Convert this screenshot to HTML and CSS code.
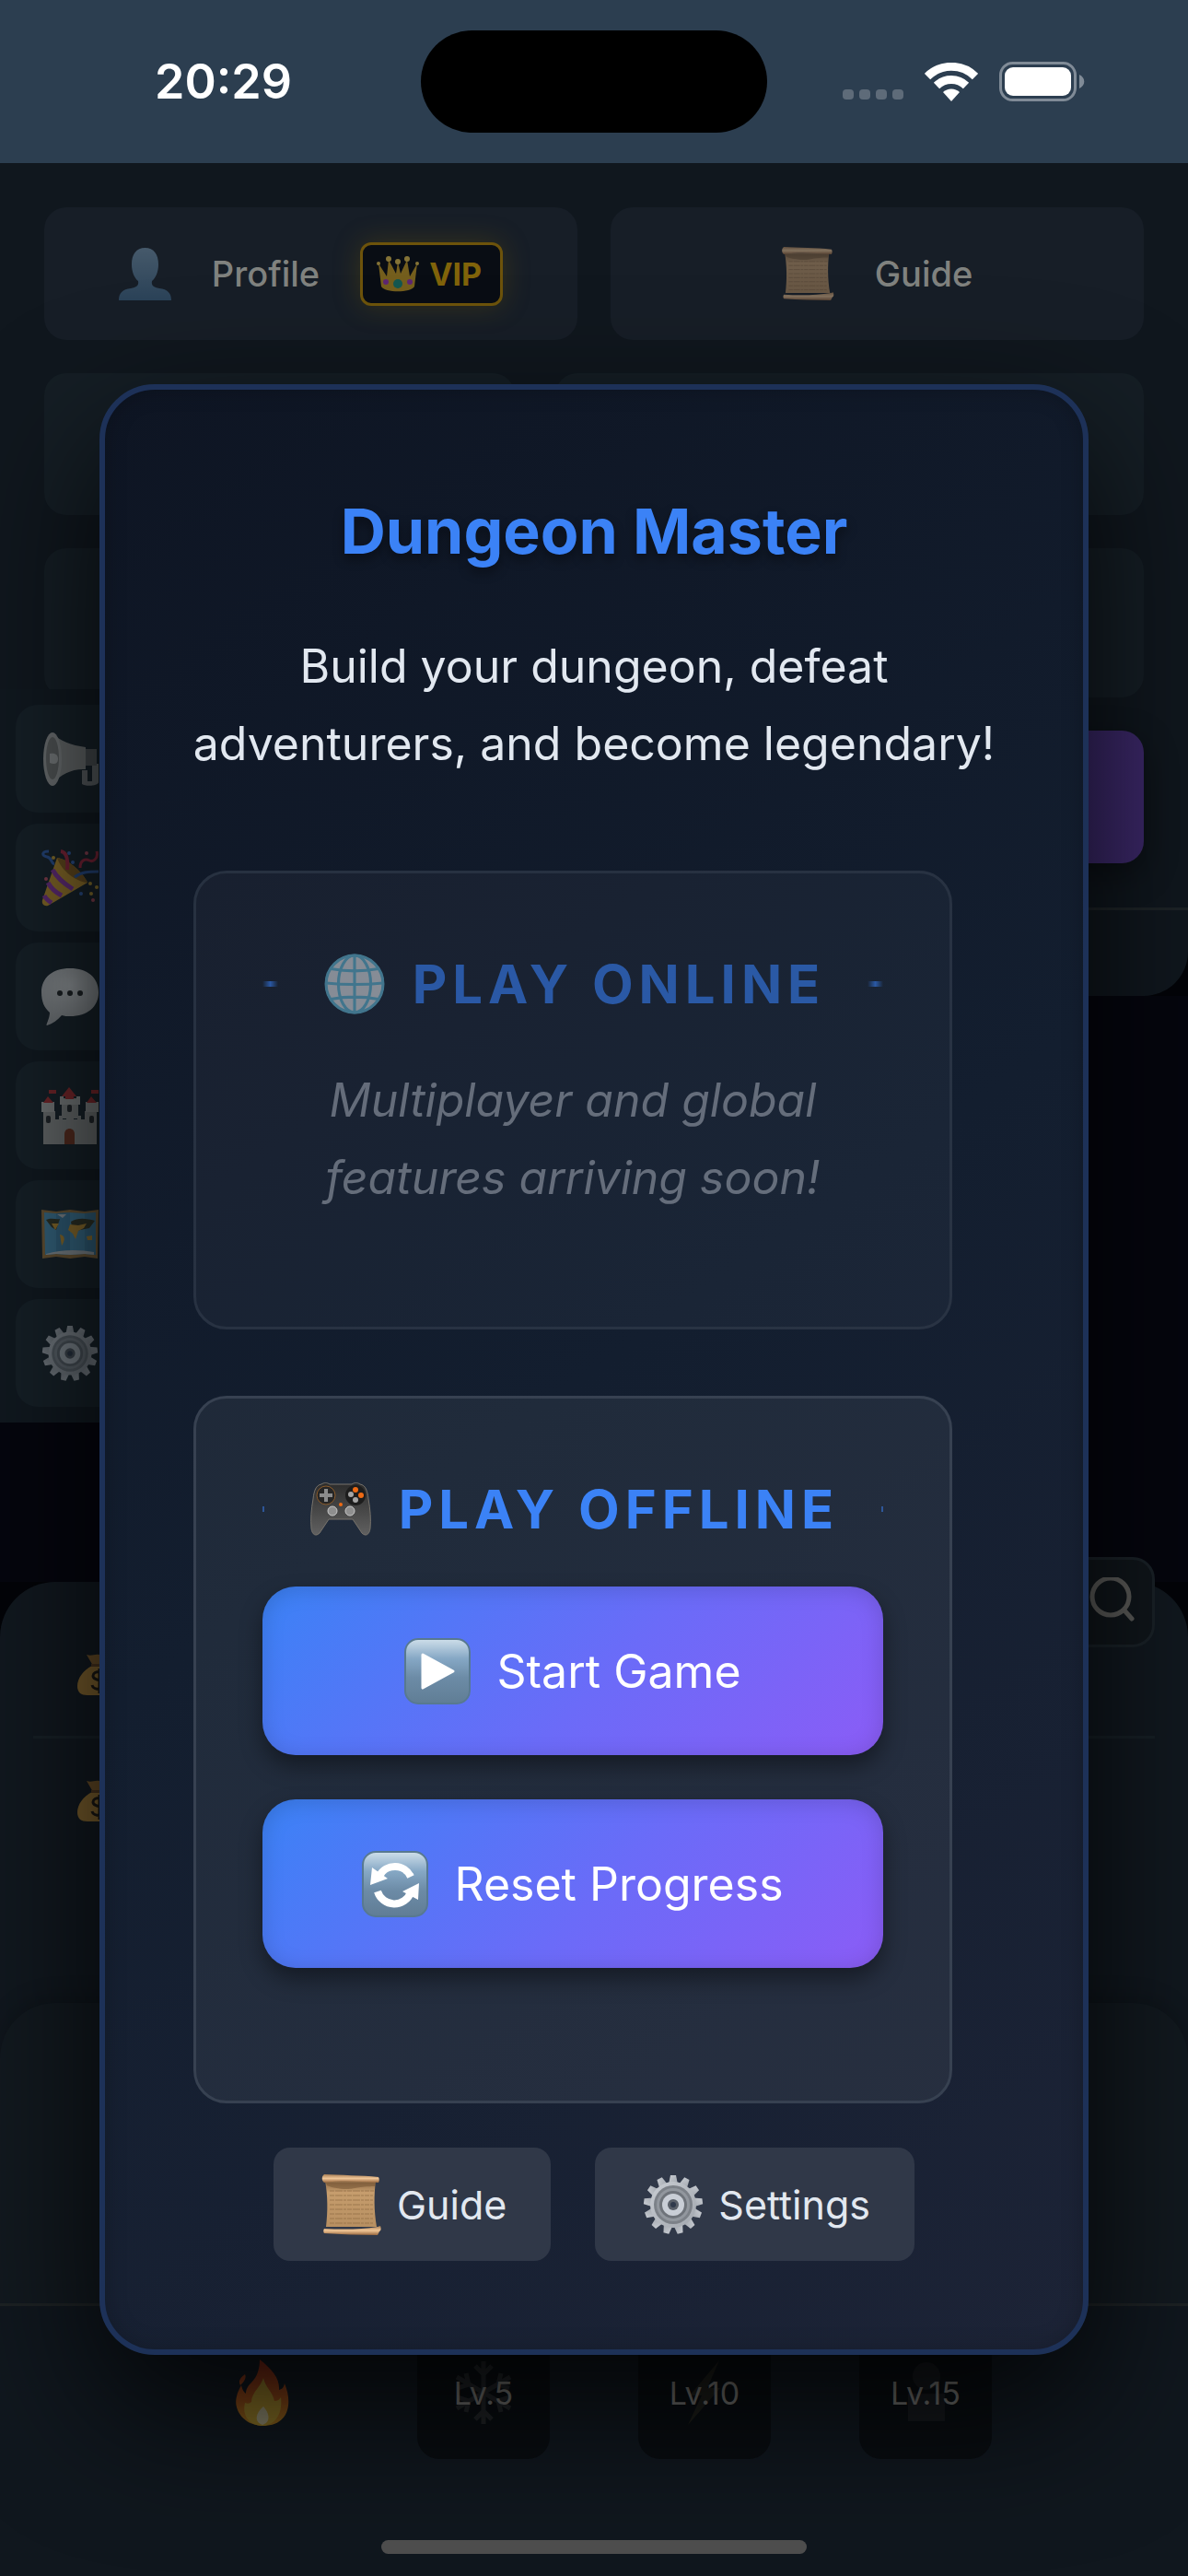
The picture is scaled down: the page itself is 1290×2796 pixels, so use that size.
FILE: index.html
```html
<!DOCTYPE html>
<html lang="en">
<head>
  <meta charset="utf-8">
  <meta name="viewport" content="width=device-width, initial-scale=1">
  <title>Dungeon Master</title>
  <link rel="stylesheet" href="styles.css">
</head>
<body>
  <!-- Shared icons -->
  <svg class="sprite" aria-hidden="true">
    <defs>
      <linearGradient id="paper" x1="0" x2="0" y1="0" y2="1">
        <stop offset="0" stop-color="#8a6845"/>
        <stop offset=".25" stop-color="#c69d6d"/>
        <stop offset="1" stop-color="#b78f61"/>
      </linearGradient>
      <linearGradient id="roll" x1="0" x2="0" y1="0" y2="1">
        <stop offset="0" stop-color="#a97f55"/>
        <stop offset=".5" stop-color="#efc596"/>
        <stop offset="1" stop-color="#99683f"/>
      </linearGradient>
      <linearGradient id="steel" x1="0" x2="1" y1="0" y2="1">
        <stop offset="0" stop-color="#c9cdd3"/>
        <stop offset="1" stop-color="#a2a7ae"/>
      </linearGradient>
      <linearGradient id="key" x1="0" x2="0" y1="0" y2="1">
        <stop offset="0" stop-color="#cfdfea"/>
        <stop offset=".3" stop-color="#86a8c5"/>
        <stop offset=".6" stop-color="#6c8ba6"/>
        <stop offset="1" stop-color="#607d95"/>
      </linearGradient>
      <linearGradient id="bust" x1="0" x2="0" y1="0" y2="1">
        <stop offset="0" stop-color="#7595ae"/>
        <stop offset="1" stop-color="#3f678a"/>
      </linearGradient>
      <linearGradient id="pad" x1="0" x2="0" y1="0" y2="1">
        <stop offset="0" stop-color="#2c2c2c"/>
        <stop offset="1" stop-color="#606060"/>
      </linearGradient>
      <linearGradient id="flame" x1="0" x2="0" y1="0" y2="1">
        <stop offset="0" stop-color="#d8320f"/>
        <stop offset=".6" stop-color="#e8690f"/>
        <stop offset="1" stop-color="#f0a81a"/>
      </linearGradient>
      <radialGradient id="bubble" cx=".5" cy=".3" r=".7">
        <stop offset="0" stop-color="#f7f7f7"/>
        <stop offset="1" stop-color="#bdbdbd"/>
      </radialGradient>
    </defs>

    <symbol id="icon-scroll" viewBox="0 0 64 66">
      <path fill="url(#paper)" d="M3 7h55c-2 15-2 32 1 50H4C6 40 6 24 3 7z"/>
      <path stroke="#8f6c45" stroke-width="1" stroke-dasharray="5 1 8 1 3 1" opacity=".7" d="M8 18h48M8 23h47M8 28h47M8 33h47M8 38h47M8 43h47M8 48h47M8 53h47"/>
      <path fill="#6f5030" opacity=".5" d="M4 9h54l-1 4c-18 0-22 3-30 3C18 16 9 14 5 12z"/>
      <path fill="url(#roll)" d="M2 0c18 1 40 1 59 3 1 2 1 4 0 6C42 8 22 6 2 9-1 7-1 2 2 0z"/>
      <path fill="url(#roll)" d="M2 59c20 1 40 1 58-2l3-1c1 3 1 5-1 6l-2 4c-20 0-40-1-58-2-1-1-1-4 0-5z"/>
    </symbol>

    <symbol id="icon-gear" viewBox="-33 -33 66 66">
      <g fill="url(#steel)">
        <path id="tooth" d="M-5-22l2-10h6l2 10z"/>
        <use href="#tooth" transform="rotate(27.7)"/>
        <use href="#tooth" transform="rotate(55.4)"/>
        <use href="#tooth" transform="rotate(83.1)"/>
        <use href="#tooth" transform="rotate(110.8)"/>
        <use href="#tooth" transform="rotate(138.5)"/>
        <use href="#tooth" transform="rotate(166.2)"/>
        <use href="#tooth" transform="rotate(193.8)"/>
        <use href="#tooth" transform="rotate(221.5)"/>
        <use href="#tooth" transform="rotate(249.2)"/>
        <use href="#tooth" transform="rotate(276.9)"/>
        <use href="#tooth" transform="rotate(304.6)"/>
        <use href="#tooth" transform="rotate(332.3)"/>
      </g>
      <circle r="25" fill="url(#steel)"/>
      <circle r="21" fill="#7c8188"/>
      <circle r="18" fill="#92979e"/>
      <circle r="15" fill="#6e737a"/>
      <circle r="12" fill="#c9ced6"/>
      <circle r="6" fill="#5a6069"/>
      <circle r="3" fill="#303a4c"/>
    </symbol>

    <symbol id="icon-moneybag" viewBox="0 0 50 46">
      <path fill="#b0792c" d="M11 1c6 2 8-1 14 0s8-1 14 0l-7 12H18z"/>
      <path fill="#d79c37" d="M17 13h16c10 5 16 14 16 22 0 7-4 10-11 10H12C5 45 1 42 1 35c0-8 6-17 16-22z"/>
      <path fill="#7b4d1d" d="M16 11h18v3H16z"/>
      <path fill="none" stroke="#201608" stroke-width="3" d="M33 24c-1-6-15-6-15 0s15 4 15 10-15 6-16 0M25 16v27"/>
    </symbol>
  </svg>

  <div class="status-bar">
    <div class="status-time">20:29</div>
    <div class="island"></div>
    <div class="status-icons">
      <span class="signal"><i></i><i></i><i></i><i></i></span>
      <svg width="58" height="42" viewBox="0 0 58 42">
        <g fill="none" stroke="#fff" stroke-width="9">
          <path d="M3 15a37 37 0 0 1 52 0"/>
          <path d="M13 25a23 23 0 0 1 32 0"/>
        </g>
        <path fill="#fff" d="M29 42l-9-10a13 13 0 0 1 18 0z"/>
      </svg>
      <svg width="93" height="44" viewBox="0 0 93 44">
        <rect x="1.5" y="1.5" width="81" height="40" rx="13" fill="none" stroke="#808b97" stroke-width="3"/>
        <rect x="6" y="6" width="72" height="31" rx="9" fill="#fff"/>
        <path fill="#808b97" d="M87 14c7 3 7 12 0 15z"/>
      </svg>
    </div>
  </div>

  <div class="game">
    <header class="header">
      <div class="header-row">
        <button class="tile nav-button">
          <svg class="dim" width="57" height="57" viewBox="0 0 57 57">
            <path fill="url(#bust)" d="M28.500 0C38 0 43 7 43 18c0 8-3 15-7 18-1 5 2 7 8 8 9 1 13 5 13 13H0c0-8 4-12 13-13 6-1 9-3 8-8-4-3-7-10-7-18C14 7 19 0 28.500 0z"/>
          </svg>
          <span>Profile</span>
          <span class="vip">
            <svg class="dim" width="46" height="39" viewBox="0 0 46 39">
              <path fill="#dfae27" d="M2 8l9 14 2-18 8 15 2-13 3 13 7-15 3 18 8-14-3 25c-4 7-32 7-36 0z"/>
              <g fill="#ffd95a"><circle cx="2" cy="8" r="2"/><circle cx="13" cy="3" r="3"/><circle cx="23" cy="6" r="3"/><circle cx="33" cy="3" r="3"/><circle cx="44" cy="8" r="2"/></g>
              <ellipse cx="23" cy="30" rx="5" ry="5" fill="#1fa08c"/>
              <circle cx="10" cy="28" r="3" fill="#b13fd0"/>
              <circle cx="36" cy="28" r="3" fill="#b13fd0"/>
            </svg>
            VIP
          </span>
        </button>
        <button class="tile nav-button">
          <svg class="dim" width="57" height="58"><use href="#icon-scroll"/></svg>
          <span>Guide</span>
        </button>
      </div>
      <div class="header-row stats">
        <div class="tile stat"></div>
        <div class="tile stat wide"></div>
      </div>
      <div class="tile stat bar"></div>
      <button class="upgrade" aria-label="Upgrade"></button>
      <div class="header-foot"></div>
    </header>

    <nav class="sidebar">
      <button class="side-button" aria-label="News">
        <svg class="dim" width="62" height="62" viewBox="0 0 62 62">
          <path fill="#8f8f8f" d="M44 43h6v12h5V36h7v20c0 4-14 5-18 2z"/>
          <path fill="#a5a39f" d="M12 3c8 8 20 13 36 15v24c-14-1-27 5-36 16z"/>
          <path fill="#6d6d6d" d="M48 20h12v18H48z"/>
          <ellipse cx="12" cy="31" rx="10" ry="29" fill="#b9b7b3"/>
          <ellipse cx="12" cy="30" rx="7" ry="23" fill="#85837f"/>
          <path fill="#c9c7c3" d="M9 25c6-1 9 1 9 6s-4 6-9 4z"/>
        </svg>
      </button>
      <button class="side-button" aria-label="Events">
        <svg class="dim" width="62" height="62" viewBox="0 0 62 62">
          <path fill="#e0a526" d="M17 9c10 1 27 14 33 27L7 61c-4 1-7-2-6-6z"/>
          <path fill="#9a6614" d="M17 9c10 1 27 14 33 27-12-1-28-12-33-27z"/>
          <path fill="none" stroke="#9a34b4" stroke-width="5" d="M12 22c5 9 14 16 22 21M7 36c4 7 9 11 15 14M3 50c2 4 5 6 8 8"/>
          <path fill="none" stroke="#c82340" stroke-width="4" d="M21 2c7 1 8 9 7 20"/>
          <path fill="none" stroke="#2f63c0" stroke-width="3" d="M36 30c8-6 16-6 26-6M8 2c-8 0-8 5-2 6s4 7 8 8"/>
          <path fill="none" stroke="#c82340" stroke-width="3" d="M42 20c0-9 6-10 10-8s10-2 8-10"/>
          <g fill="#e0b030"><circle cx="13" cy="9" r="2"/><circle cx="53" cy="37" r="2"/><circle cx="60" cy="41" r="2"/><circle cx="54" cy="48" r="2"/></g>
          <g fill="#d8536a"><circle cx="5" cy="32" r="2"/><circle cx="49" cy="4" r="2"/><circle cx="56" cy="55" r="2"/></g>
          <g fill="#3a6fd0"><circle cx="30" cy="4" r="2"/><circle cx="34" cy="14" r="2"/><circle cx="43" cy="48" r="2"/></g>
        </svg>
      </button>
      <button class="side-button" aria-label="Chat">
        <svg class="dim" width="62" height="62" viewBox="0 0 62 62">
          <path fill="url(#bubble)" d="M31 0c19 0 31 10 31 26S50 52 31 52c-3 0-6 0-9-1-4 5-10 9-16 11-2 0 3-7 3-14C3 43 0 36 0 26 0 10 12 0 31 0z"/>
          <g fill="#222"><circle cx="20" cy="27" r="3"/><circle cx="31" cy="27" r="3"/><circle cx="42" cy="27" r="3"/></g>
        </svg>
      </button>
      <button class="side-button" aria-label="Castle">
        <svg class="dim" width="62" height="62" viewBox="0 0 62 62">
          <path fill="#a8a6a2" d="M2 26h13v36H2zM47 26h13v36H47zM15 35h4v-4h4v4h4v-4h8v4h4v-4h4v4h4v27H15zM22 12h18v22H22z"/>
          <path fill="#c2c0bc" d="M0 16h14v11H0zM48 16h14v11H48zM20 10h4v3h4v-3h6v3h4v-3h4v9H20z"/>
          <path fill="#c22a2a" d="M30 0l8 10h-3v3h-9v-3h-4zM7 10l6 7H2zM54 10l6 7H49zM8 3h8v4H8zM54 3h8v4h-8z"/>
          <path fill="#8a3418" d="M25 62V51c0-8 11-8 11 0v11z"/>
          <g fill="#262626"><rect x="28" y="19" width="5" height="8" rx="2"/><rect x="5" y="31" width="5" height="8" rx="2"/><rect x="52" y="31" width="5" height="8" rx="2"/></g>
        </svg>
      </button>
      <button class="side-button" aria-label="World map">
        <svg class="dim" width="62" height="62" viewBox="0 0 62 62">
          <path fill="#a97b3a" d="M0 4l16 2 15-2 16 2 15-2-1 53-14-2-16 2-15-2-15 2z"/>
          <path fill="#4f9fca" d="M3 7l13 1 15-1 16 1 12-1v46l-12-1-16 1-15-1-12 1z"/>
          <path fill="#3c82ab" d="M16 8l15-1v46l-15-1zM47 8l12-1v46l-12-1z" opacity=".6"/>
          <path fill="#3b3b22" d="M5 15c6-3 10 0 15-1l-4 12-5-3zM32 17c8-5 18-3 26-1l-6 8-10 2-8 3z"/>
          <path fill="#e2a52c" d="M11 19h8l-4 7zM20 31c6 1 6 6 2 12zM31 20l9 1 9-2-3 5-6 3-3 9-3-6-5-4zM49 33l6-1v5h-5z"/>
          <path fill="#cfd4d8" d="M5 52c16-5 36-5 52-2v3l-10-1-16 1-15-1-11 1zM17 9h10l-4 4z"/>
        </svg>
      </button>
      <button class="side-button" aria-label="Settings">
        <svg class="dim" width="62" height="62"><use href="#icon-gear"/></svg>
      </button>
    </nav>

    <main class="arena">
      <button class="search" aria-label="Search">
        <svg width="54" height="54" viewBox="0 0 54 54" fill="none" stroke="#5c5c5a" stroke-width="5" stroke-linecap="round">
          <circle cx="28" cy="21" r="20"/>
          <path d="M43 36l8 9"/>
        </svg>
      </button>
    </main>

    <section class="panel resources">
      <div class="resource"><svg class="dim" width="50" height="46"><use href="#icon-moneybag"/></svg></div>
      <div class="resource"><svg class="dim" width="50" height="46"><use href="#icon-moneybag"/></svg></div>
    </section>
    <section class="panel details"></section>

    <footer class="footer">
      <div class="skills">
        <button class="skill" aria-label="Fire">
          <svg class="dim" width="58" height="72" viewBox="0 0 58 72">
            <path fill="url(#flame)" d="M26 0c14 11 22 21 21 33 4-1 5-3 6-7 9 21 5 46-23 46C8 72-3 54 1 40c1-5 3-8 5-12 1 4 2 7 5 9 0-5 2-8 6-12C24 18 26 9 26 0zM10 16c2 4-1 8-5 12-3-5 1-9 5-12z"/>
            <path fill="#f6c22c" d="M30 20c2 10 10 15 12 25 3 0 5-1 7-4 2 15-4 30-20 31C13 71 7 60 10 47c3 1 5 1 7-1 0-10 10-16 13-26z"/>
            <path fill="#fff0b8" d="M30 51c7 8 8 17-1 20-9-3-8-12 1-20z"/>
          </svg>
        </button>
        <button class="skill locked" disabled>
          <svg class="ghost" width="66" height="70" viewBox="0 0 66 70" fill="none" stroke="#9a9a9a" stroke-width="5"><path d="M33 1v68M4 18l58 34M4 52l58-34M24 6l9 9 9-9M24 64l9-9 9 9M5 30l12-4-3-12M61 40l-12 4 3 12M5 40l12 4-3 12M61 30l-12-4 3-12"/></svg>
          <span>Lv.5</span>
        </button>
        <button class="skill locked" disabled>
          <svg class="ghost" width="40" height="70" viewBox="0 0 40 70" fill="#8c7a4a"><path d="M36 0L4 38h13L2 70l35-40H23z"/></svg>
          <span>Lv.10</span>
        </button>
        <button class="skill locked" disabled>
          <svg class="ghost" width="50" height="66" viewBox="0 0 50 66" fill="#5b5b5b"><circle cx="26" cy="15" r="15"/><path d="M6 34h40v30H6z"/></svg>
          <span>Lv.15</span>
        </button>
      </div>
      <div class="home-indicator"></div>
    </footer>

    <div class="overlay">
      <div class="modal" role="dialog" aria-labelledby="modal-title">
        <h1 id="modal-title">Dungeon Master</h1>
        <p class="intro">Build your dungeon, defeat adventurers, and become legendary!</p>

        <section class="mode mode-disabled">
          <h2 class="mode-title">
            <span>
              <svg width="66" height="66" viewBox="0 0 64 64">
                <circle cx="32" cy="32" r="31" fill="#d5d9de"/>
                <g fill="none" stroke="#62b2cf" stroke-width="3">
                  <circle cx="32" cy="32" r="30"/>
                  <ellipse cx="32" cy="32" rx="17" ry="30"/>
                  <path d="M32 2v60M2 31c20 2 40 2 60 0M7 16c16 3 34 3 50 0M7 48c16-3 34-3 50 0"/>
                </g>
              </svg>
              PLAY ONLINE
            </span>
          </h2>
          <p class="soon">Multiplayer and global features arriving soon!</p>
        </section>

        <section class="mode">
          <h2 class="mode-title">
            <span>
              <svg width="66" height="58" viewBox="0 0 66 58">
                <path fill="url(#pad)" stroke="#77736c" stroke-width="1" d="M12 2c3-2 6-2 9 0h24c3-2 6-2 9 0 6 1 8 7 9 16 2 11 3 22 2 32-1 7-5 9-9 5L46 40H20L10 55c-4 4-8 2-9-5-1-10 0-21 2-32C4 9 6 3 12 2z"/>
                <circle cx="17" cy="14" r="10" fill="#262626" stroke="#8a5a2a" stroke-width="1"/>
                <path fill="#8b8b8b" d="M15 7h4v5h5v4h-5v5h-4v-5h-5v-4h5z"/>
                <circle cx="49" cy="14" r="11" fill="#1d1d1d"/>
                <g fill="#ee6a14"><circle cx="49" cy="8" r="3"/><circle cx="55" cy="14" r="3"/><circle cx="33" cy="24" r="2"/></g>
                <g fill="#a5a5a5"><circle cx="44" cy="13" r="3"/><circle cx="49" cy="19" r="3"/></g>
                <g fill="#8f8f8f" stroke="#c9c9c9" stroke-width="1"><circle cx="24" cy="31" r="5"/><circle cx="43" cy="31" r="5"/></g>
              </svg>
              PLAY OFFLINE
            </span>
          </h2>
          <div class="mode-actions">
            <button class="play-button">
              <svg width="72" height="72" viewBox="0 0 72 72">
                <rect x="1" y="1" width="70" height="70" rx="14" fill="url(#key)" stroke="#587990" stroke-width="2"/>
                <path fill="#fff" stroke="#fff" stroke-width="3" stroke-linejoin="round" d="M20 18l33 18-33 18z"/>
              </svg>
              Start Game
            </button>
            <button class="play-button">
              <svg width="72" height="72" viewBox="0 0 72 72">
                <rect x="1" y="1" width="70" height="70" rx="14" fill="url(#key)" stroke="#587990" stroke-width="2"/>
                <path fill="none" stroke="#fff" stroke-width="8" d="M53 28a19 19 0 0 0-34-1M17 44a19 19 0 0 0 36 1"/>
                <path fill="#fff" d="M11 18l-2 19 19-7zM62 35l-18 9 17 9z"/>
              </svg>
              Reset Progress
            </button>
          </div>
        </section>

        <div class="modal-links">
          <button class="link-button"><svg width="66" height="66"><use href="#icon-scroll"/></svg>Guide</button>
          <button class="link-button"><svg width="66" height="66"><use href="#icon-gear"/></svg>Settings</button>
        </div>
      </div>
    </div>
  </div>
</body>
</html>
```

FILE: styles.css
```css
* {
  box-sizing: border-box;
}
body {
  margin: 0;
  min-height: 100vh;
  display: flex;
  flex-direction: column;
  background: #030408;
  color: #e2e8f0;
  font-family: Inter, "Liberation Sans", sans-serif;
}
button {
  border: 0;
  padding: 0;
  background: none;
  color: inherit;
  font-family: inherit;
}
svg {
  display: block;
  flex: none;
}
.sprite {
  position: absolute;
  width: 0;
  height: 0;
}
.dim {
  opacity: 0.5;
}

/* Status bar */
.status-bar {
  height: 177px;
  padding: 0 112px 0 168px;
  display: grid;
  grid-template-columns: 1fr 376px 1fr;
  align-items: center;
  background: #2c3e50;
  color: #fff;
}
.status-time {
  font-size: 52px;
  font-weight: 600;
}
.island {
  height: 111px;
  border-radius: 56px;
  background: #000;
  margin-left: -28px;
  margin-right: 28px;
}
.status-icons {
  display: flex;
  justify-content: flex-end;
  align-items: center;
  gap: 23px;
}
.signal {
  display: flex;
  gap: 6px;
  padding-top: 28px;
}
.signal i {
  width: 12px;
  height: 11px;
  border-radius: 4px;
  background: #5e6b79;
}

/* Game screen */
.game {
  position: relative;
  flex: 1;
  display: flex;
  flex-direction: column;
}
.header {
  display: flex;
  flex-direction: column;
  gap: 36px;
  padding-top: 48px;
  background: #10171e;
  border-radius: 0 0 48px 48px;
}
.header > * {
  margin: 0 48px;
}
.header-row {
  display: flex;
  gap: 36px;
}
.tile {
  background: #171e27;
  border-radius: 24px;
}
.nav-button {
  flex: 1;
  height: 144px;
  display: flex;
  align-items: center;
  justify-content: center;
  gap: 44px;
  color: #80827f;
  font-size: 38px;
  font-weight: 500;
}
.vip {
  display: flex;
  align-items: center;
  gap: 11px;
  height: 69px;
  padding: 0 20px 0 15px;
  border: 3px solid #6d530b;
  border-radius: 12px;
  background: #090d14;
  color: #80630a;
  font-size: 34px;
  font-weight: 700;
  box-shadow: 0 0 30px rgba(130, 100, 0, 0.3);
}
.stats {
  gap: 44px;
}
.stat {
  flex: 1;
  height: 154px;
  background: #151e25;
}
.stat.wide {
  flex: 1.25;
}
.stat.bar {
  flex: none;
  height: 162px;
}
.upgrade {
  height: 144px;
  border-radius: 24px;
  background: linear-gradient(90deg, #1a2b66, #3c2869);
  box-shadow: 0 12px 36px rgba(0, 0, 0, 0.4);
}
.header .header-foot {
  height: 96px;
  margin: 12px 0 0;
  border-top: 3px solid #1d2327;
}
.sidebar {
  position: absolute;
  z-index: 1;
  top: 571px;
  left: 0;
  display: flex;
  flex-direction: column;
  gap: 12px;
  padding: 17px;
  background: #10181f;
}
.side-button {
  width: 117px;
  height: 117px;
  display: flex;
  align-items: center;
  justify-content: center;
  border-radius: 24px;
  background: #151f26;
}
.arena {
  flex: 1;
  position: relative;
  background: #05060e;
}
.search {
  position: absolute;
  right: 36px;
  bottom: -71px;
  width: 98px;
  height: 98px;
  display: flex;
  align-items: center;
  justify-content: center;
  border: 3px solid #1a2228;
  border-radius: 24px;
  background: #10161b;
}
.panel {
  background: #11181f;
  border-radius: 60px 60px 0 0;
}
.resources {
  height: 517px;
  padding: 35px 36px;
}
.resource {
  display: flex;
  align-items: center;
  height: 135px;
  padding-left: 47px;
  border-bottom: 3px solid #172026;
}
.resource:last-child {
  border: 0;
}
.details {
  height: 326px;
  margin-top: -60px;
  background: #12191f;
  box-shadow: 0 -6px 24px rgba(0, 0, 0, 0.2);
}
.footer {
  height: 296px;
  padding: 22px 0 24px;
  display: flex;
  flex-direction: column;
  align-items: center;
  justify-content: space-between;
  border-top: 3px solid #1d2224;
  background: #10171e;
}
.skills {
  display: flex;
  gap: 96px;
}
.skill {
  position: relative;
  width: 144px;
  height: 144px;
  display: flex;
  align-items: center;
  justify-content: center;
  border-radius: 24px;
}
.locked {
  background: #090d11;
  color: #6e6e6c;
  font-size: 34px;
}
.locked span {
  position: relative;
  z-index: 1;
}
.ghost {
  position: absolute;
  opacity: 0.15;
}
.home-indicator {
  position: relative;
  z-index: 3;
  width: 462px;
  height: 15px;
  border-radius: 8px;
  background: #4d4d4d;
}

/* Start dialog */
.overlay {
  position: absolute;
  inset: 0;
  z-index: 2;
  display: grid;
  place-items: center;
  overflow: hidden;
}
.modal {
  width: calc(100% - 216px);
  padding: 96px;
  border: 6px solid #1d3158;
  border-radius: 60px;
  background: linear-gradient(145deg, #0e1523 0%, #131e2f 50%, #1c2336 100%);
  box-shadow: 0 60px 150px rgba(0, 0, 0, 0.8), inset 0 0 24px rgba(0, 0, 0, 0.2);
  text-align: center;
}
.modal h1 {
  margin: 0 0 48px;
  color: #3b82f6;
  font-size: 68px;
  line-height: 114px;
  text-shadow: 0 6px 12px rgba(0, 0, 0, 0.4);
}
.intro {
  margin: 0 -24px 96px;
  font-size: 50px;
  line-height: 84px;
}
.mode {
  margin: 0 46px 48px 0;
  padding: 72px;
  border: 3px solid #374151;
  border-radius: 36px;
  background: rgba(255, 255, 255, 0.06);
}
.mode-disabled {
  margin-bottom: 72px;
  opacity: 0.6;
}
.mode-title {
  display: flex;
  align-items: center;
  margin: 0 0 36px;
  color: #3b82f6;
  font-size: 58px;
  line-height: 96px;
  letter-spacing: 6px;
  white-space: nowrap;
}
.mode-title::before,
.mode-title::after {
  content: "";
  flex: 1;
  height: 6px;
  background: linear-gradient(90deg, transparent, #3b82f6, transparent);
}
.mode-title span {
  display: flex;
  align-items: center;
  gap: 30px;
  margin: 0 46px 0 50px;
}
.soon {
  margin: 0 0 48px;
  color: #9ca3af;
  font-size: 50px;
  font-style: italic;
  line-height: 84px;
}
.mode-actions {
  display: flex;
  flex-direction: column;
  gap: 48px;
  margin-bottom: 72px;
}
.play-button {
  height: 183px;
  display: flex;
  align-items: center;
  justify-content: center;
  gap: 28px;
  border-radius: 36px;
  background: linear-gradient(135deg, #3b82f6, #6b6bf8 55%, #8b5cf6);
  box-shadow: 0 12px 24px rgba(0, 0, 0, 0.4), inset 0 3px 24px rgba(0, 0, 0, 0.15);
  color: #fff;
  font-size: 50px;
}
.modal-links {
  display: flex;
  justify-content: center;
  gap: 48px;
}
.link-button {
  height: 123px;
  padding: 0 48px 0 52px;
  display: flex;
  align-items: center;
  gap: 16px;
  border-radius: 18px;
  background: #303848;
  font-size: 43px;
}
```
